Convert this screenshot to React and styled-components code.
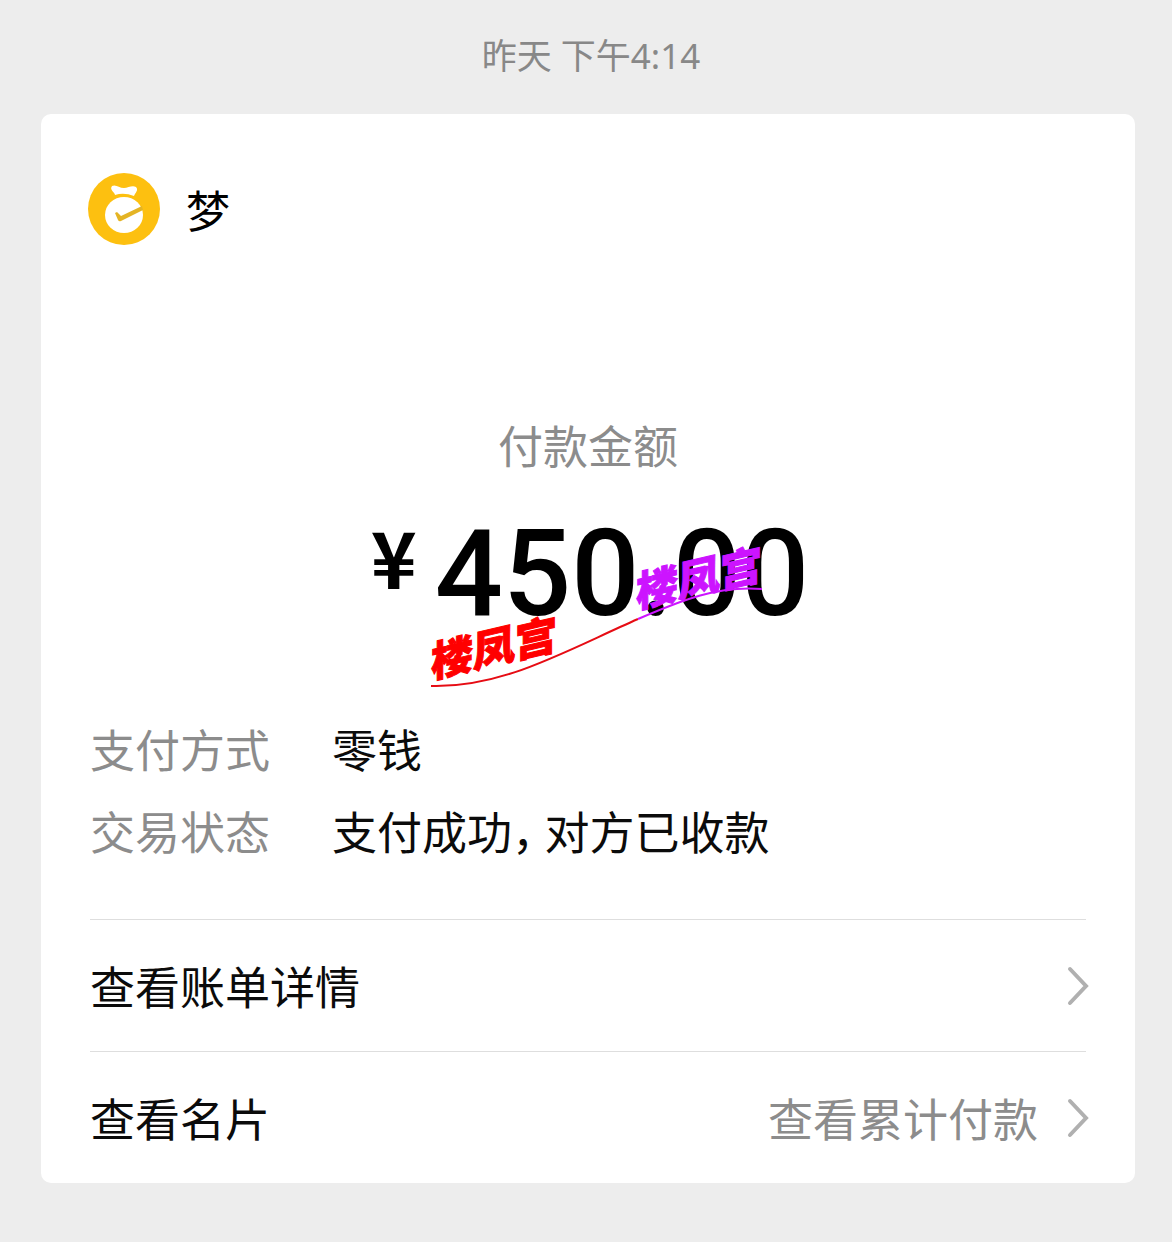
import React from "react";
import styled, { createGlobalStyle } from "styled-components";

const GlobalStyle = createGlobalStyle`
  *, *::before, *::after { box-sizing: border-box; }
  body {
    margin: 0;
    background: #ededed;
    font-family: "Noto Sans CJK SC", sans-serif;
    color: #0b0b0b;
  }
`;

const Page = styled.main`
  display: flex;
  flex-direction: column;
  min-height: 100vh;
  padding: 32px 37px 59px 41px;
`;

const Timestamp = styled.time`
  padding-left: 6px;
  margin-bottom: 34px;
  font-family: "Noto Sans", "Noto Sans CJK SC", sans-serif;
  font-size: 35px;
  line-height: 48px;
  text-align: center;
  color: #888;
`;

const Card = styled.article`
  padding: 59px 49px 0;
  border-radius: 10px;
  background: #fff;
  font-size: 45px;
`;

const Payee = styled.header`
  display: flex;
  align-items: center;
  gap: 26px;
  height: 72px;
`;

const PayeeIcon = styled.svg`
  width: 72px;
  height: 72px;
  margin-left: -2px;
`;

const PayeeName = styled.h1`
  margin: 0;
  font-size: 44px;
  font-weight: 400;
  line-height: 60px;
  color: #000;
`;

const Summary = styled.section`
  display: flex;
  flex-direction: column;
  align-items: center;
  margin-top: 170px;
`;

const SummaryLabel = styled.h2`
  margin: 0;
  font-size: 45px;
  font-weight: 400;
  line-height: 60px;
  color: #8c8c8c;
`;

const Amount = styled.div`
  position: relative;
  display: flex;
  align-items: flex-start;
  gap: 18px;
  height: 144px;
  margin-top: 27px;
  padding-left: 4px;
  color: #000;
`;

const Currency = styled.span`
  font-family: "Noto Sans CJK SC", sans-serif;
  font-size: 78px;
  font-weight: 700;
  line-height: 106px;
`;

const Figure = styled.span`
  font-family: Roboto, sans-serif;
  font-size: 120px;
  font-weight: 500;
  line-height: 144px;
`;

const Watermark = styled.svg`
  position: absolute;
  left: 64px;
  top: 34px;
  width: 340px;
  height: 160px;
  overflow: visible;
  pointer-events: none;
`;

const WatermarkText = styled.text`
  font-family: "Noto Sans CJK SC", sans-serif;
  font-size: 42px;
  font-weight: 900;
  fill: ${(p) => p.$color};
  stroke: ${(p) => p.$color};
  stroke-width: 1px;
`;

const Details = styled.dl`
  display: grid;
  grid-template-columns: 242px 1fr;
  margin: 62px 0 47px;
  line-height: 82px;
`;

const Term = styled.dt`
  color: #8c8c8c;
`;

const Value = styled.dd`
  margin: 0;
`;

const Comma = styled.span`
  margin-right: 10px;
  font-feature-settings: "halt";
`;

const ActionLink = styled.a`
  display: flex;
  align-items: center;
  height: 132px;
  border-top: 1px solid #dedede;
  color: inherit;
  text-decoration: none;
`;

const ActionNote = styled.span`
  margin-left: auto;
  color: #8c8c8c;
`;

const Arrow = styled.svg`
  width: 24px;
  height: 40px;
  margin: 0 -4px 0 ${(p) => (p.$push ? "auto" : "28px")};
  fill: none;
  stroke: #b0b0b0;
  stroke-width: 4px;
  stroke-linecap: round;
`;

function Chevron({ push }) {
  return (
    <Arrow $push={push} viewBox="0 0 24 40" aria-hidden="true">
      <path d="M4 3 L20 20 L4 37" />
    </Arrow>
  );
}

export default function App() {
  return (
    <>
      <GlobalStyle />
      <Page>
        <Timestamp>昨天 下午4:14</Timestamp>
        <Card>
          <Payee>
            <PayeeIcon viewBox="0 0 72 72" aria-hidden="true">
              <circle cx="36" cy="36" r="36" fill="#fdc010" />
              <path
                d="M24 13 C28 11 31 15 36 15 C40 15 44 12 48 14 C51 17 47 20 46 23 Q36 19 27 22 C27 19 21 17 24 13 Z"
                fill="#fff"
              />
              <ellipse cx="36" cy="42" rx="19" ry="18" fill="#fff" />
              <path
                d="M27 40 L29 39 L33 43 L54 33 L55 37 L33 48 Q31 49 30 47 Z"
                fill="#e4b424"
              />
            </PayeeIcon>
            <PayeeName>梦</PayeeName>
          </Payee>

          <Summary>
            <SummaryLabel>付款金额</SummaryLabel>
            <Amount>
              <Currency>¥</Currency>
              <Figure>450.00</Figure>
              <Watermark viewBox="0 0 340 160">
                <path
                  d="M0 150 C72 152 134 115 207 83"
                  fill="none"
                  stroke="#e60c14"
                  strokeWidth="2"
                />
                <path
                  d="M207 83 C249 65 287 49 331 53"
                  fill="none"
                  stroke="#cc14ff"
                  strokeWidth="2"
                />
                <WatermarkText $color="#ff0000" transform="translate(0 142) skewY(-13)">
                  楼凤宫
                </WatermarkText>
                <WatermarkText $color="#cc14ff" transform="translate(205 72) skewY(-13)">
                  楼凤宫
                </WatermarkText>
              </Watermark>
            </Amount>
          </Summary>

          <Details>
            <Term>支付方式</Term>
            <Value>零钱</Value>
            <Term>交易状态</Term>
            <Value>
              支付成功<Comma>，</Comma>对方已收款
            </Value>
          </Details>

          <nav>
            <ActionLink href="#bill">
              <span>查看账单详情</span>
              <Chevron push />
            </ActionLink>
            <ActionLink href="#card">
              <span>查看名片</span>
              <ActionNote>查看累计付款</ActionNote>
              <Chevron />
            </ActionLink>
          </nav>
        </Card>
      </Page>
    </>
  );
}
